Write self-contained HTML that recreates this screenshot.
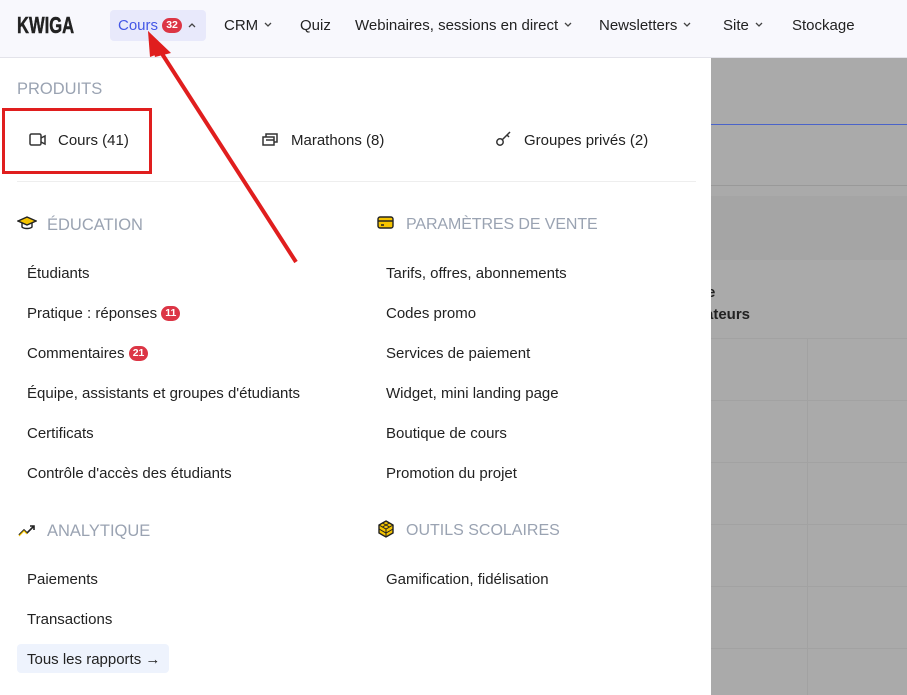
<!DOCTYPE html>
<html><head><meta charset="utf-8"><style>
*{margin:0;padding:0;box-sizing:border-box}
body{width:907px;height:695px;overflow:hidden;position:relative;font-family:"Liberation Sans",Arial,sans-serif;background:#aaa;color:#222}
.hdr{position:absolute;left:0;top:0;width:907px;height:58px;background:#f8f8fd;border-bottom:1px solid #e3e3ea}
.logo{position:absolute;left:17px;top:12px;font-weight:bold;font-size:23px;color:#222;transform:scaleX(.72);transform-origin:left;-webkit-text-stroke:.5px #222}
.nav{position:absolute;top:17px;font-size:15px;color:#222;white-space:nowrap}
.chev{display:inline-block;margin-left:6px;vertical-align:2px}
.act{position:absolute;left:110px;top:10px;width:96px;height:31px;background:#e8e9fb;border-radius:4px}
.badge{display:inline-block;background:#dc3545;color:#fff;font-size:10.5px;font-weight:bold;border-radius:8px;padding:1px 4px;line-height:13px;vertical-align:2px}
.panel{position:absolute;left:0;top:58px;width:711px;height:637px;background:#fff}
.t{position:absolute;font-size:15px;color:#222;white-space:nowrap}
.h{position:absolute;font-size:16.5px;color:#9aa3b2;white-space:nowrap}
.gl{position:absolute;background:#a2a2a2}
</style></head><body>
<div class="gl" style="left:711px;top:124px;width:196px;height:1px;background:#4a63c9"></div>
<div class="gl" style="left:711px;top:185px;width:196px;height:1px;background:#999"></div>
<div style="position:absolute;left:711px;top:196px;width:196px;height:64px;background:#a5a5a5"></div>
<div class="t" style="left:707px;top:284px;font-weight:bold">e</div>
<div class="t" style="top:306px;font-weight:bold;left:705px">ateurs</div>
<div class="gl" style="left:711px;top:338px;width:196px;height:1px"></div>
<div class="gl" style="left:711px;top:400px;width:196px;height:1px"></div>
<div class="gl" style="left:711px;top:462px;width:196px;height:1px"></div>
<div class="gl" style="left:711px;top:524px;width:196px;height:1px"></div>
<div class="gl" style="left:711px;top:586px;width:196px;height:1px"></div>
<div class="gl" style="left:711px;top:648px;width:196px;height:1px"></div>
<div class="gl" style="left:807px;top:338px;width:1px;height:357px"></div>

<div class="hdr">
<div class="logo">KWIGA</div>
<div class="act"></div>
<div class="nav" style="left:118px;color:#4457e6">Cours <span class="badge">32</span><svg class="chev" width="8" height="6" viewBox="0 0 8 6"><path d="M1 5l3-3 3 3" fill="none" stroke="#444" stroke-width="1.3"/></svg></div>
<div class="nav" style="left:224px">CRM<svg class="chev" width="8" height="6" viewBox="0 0 8 6"><path d="M1 1l3 3 3-3" fill="none" stroke="#444" stroke-width="1.3"/></svg></div>
<div class="nav" style="left:300px">Quiz</div>
<div class="nav" style="left:355px">Webinaires, sessions en direct<svg class="chev" width="8" height="6" viewBox="0 0 8 6"><path d="M1 1l3 3 3-3" fill="none" stroke="#444" stroke-width="1.3"/></svg></div>
<div class="nav" style="left:599px">Newsletters<svg class="chev" width="8" height="6" viewBox="0 0 8 6"><path d="M1 1l3 3 3-3" fill="none" stroke="#444" stroke-width="1.3"/></svg></div>
<div class="nav" style="left:723px">Site<svg class="chev" width="8" height="6" viewBox="0 0 8 6"><path d="M1 1l3 3 3-3" fill="none" stroke="#444" stroke-width="1.3"/></svg></div>
<div class="nav" style="left:792px">Stockage</div>
</div>

<div class="panel">
<div class="h" style="left:17px;top:22px">PRODUITS</div>
<svg style="position:absolute;left:29px;top:74px" width="18" height="16" viewBox="0 0 18 16"><rect x="1" y="2" width="11" height="11" rx="1.5" fill="none" stroke="#333" stroke-width="1.5"/><path d="M12 6l4-2v8l-4-2" fill="none" stroke="#333" stroke-width="1.5"/></svg>
<div class="t" style="left:58px;top:74px">Cours (41)</div>
<svg style="position:absolute;left:262px;top:73px" width="18" height="16" viewBox="0 0 18 16"><rect x="1" y="6" width="11" height="8" fill="none" stroke="#333" stroke-width="1.5"/><path d="M4 6V3h11v8h-3M4 9h8" fill="none" stroke="#333" stroke-width="1.5"/></svg>
<div class="t" style="left:291px;top:74px">Marathons (8)</div>
<svg style="position:absolute;left:495px;top:73px" width="18" height="16" viewBox="0 0 18 16"><circle cx="5" cy="11" r="3.2" fill="none" stroke="#333" stroke-width="1.5"/><path d="M7.5 8.5L15 1M12 4l2 2" fill="none" stroke="#333" stroke-width="1.5"/></svg>
<div class="t" style="left:524px;top:74px">Groupes privés (2)</div>
<div style="position:absolute;left:17px;top:123px;width:679px;height:1px;background:#eee"></div>

<svg style="position:absolute;left:17px;top:158px" width="20" height="16" viewBox="0 0 20 16"><path d="M1 5l9-4 9 4-9 4z" fill="#f5c400" stroke="#222" stroke-width="1.4"/><path d="M5 7v4c2 2 8 2 10 0V7" fill="none" stroke="#222" stroke-width="1.4"/></svg>
<div class="h" style="left:47px;top:158px">ÉDUCATION</div>
<div class="t" style="left:27px;top:207px">Étudiants</div>
<div class="t" style="left:27px;top:247px">Pratique : réponses <span class="badge">11</span></div>
<div class="t" style="left:27px;top:287px">Commentaires <span class="badge">21</span></div>
<div class="t" style="left:27px;top:327px">Équipe, assistants et groupes d'étudiants</div>
<div class="t" style="left:27px;top:367px">Certificats</div>
<div class="t" style="left:27px;top:407px">Contrôle d'accès des étudiants</div>

<svg style="position:absolute;left:377px;top:158px" width="18" height="14" viewBox="0 0 18 14"><rect x="1" y="1" width="15" height="11" rx="2" fill="#f5c400" stroke="#222" stroke-width="1.4"/><path d="M1 5h15M4 9h3" stroke="#222" stroke-width="1.4"/></svg>
<div class="h" style="left:406px;top:158px;font-size:16px;letter-spacing:-.1px">PARAMÈTRES DE VENTE</div>
<div class="t" style="left:386px;top:207px">Tarifs, offres, abonnements</div>
<div class="t" style="left:386px;top:247px">Codes promo</div>
<div class="t" style="left:386px;top:287px">Services de paiement</div>
<div class="t" style="left:386px;top:327px">Widget, mini landing page</div>
<div class="t" style="left:386px;top:367px">Boutique de cours</div>
<div class="t" style="left:386px;top:407px">Promotion du projet</div>

<svg style="position:absolute;left:18px;top:465px" width="18" height="14" viewBox="0 0 18 14"><path d="M1 12l5-5 3 3 7-7M12 3h4v4" fill="none" stroke="#222" stroke-width="1.6"/><path d="M1 13l5-5 3 3" fill="none" stroke="#f5c400" stroke-width="1.2"/></svg>
<div class="h" style="left:47px;top:464px">ANALYTIQUE</div>
<div class="t" style="left:27px;top:513px">Paiements</div>
<div class="t" style="left:27px;top:553px">Transactions</div>
<div style="position:absolute;left:17px;top:586px;width:152px;height:29px;background:#eef3fd;border-radius:4px"></div>
<div class="t" style="left:27px;top:593px">Tous les rapports →</div>

<svg style="position:absolute;left:377px;top:462px" width="18" height="18" viewBox="0 0 18 18"><path d="M9 1l7 4v8l-7 4-7-4V5z" fill="#f5c400" stroke="#222" stroke-width="1.4"/><path d="M2 5l7 4 7-4M9 9v8M5.5 3l7 4M12.5 3l-7 4M2 9l7 4 7-4" fill="none" stroke="#222" stroke-width="1"/></svg>
<div class="h" style="left:406px;top:464px;font-size:16px">OUTILS SCOLAIRES</div>
<div class="t" style="left:386px;top:513px">Gamification, fidélisation</div>
</div>

<div style="position:absolute;left:2px;top:108px;width:150px;height:66px;border:3px solid #e01e1e"></div>
<svg style="position:absolute;left:0;top:0" width="907" height="695"><line x1="296" y1="262" x2="157" y2="46" stroke="#e01e1e" stroke-width="4"/><path d="M148 31l23 22-16 4z" fill="#e01e1e"/><path d="M148 31l2 26 16-6z" fill="#e01e1e"/></svg>
</body></html>
